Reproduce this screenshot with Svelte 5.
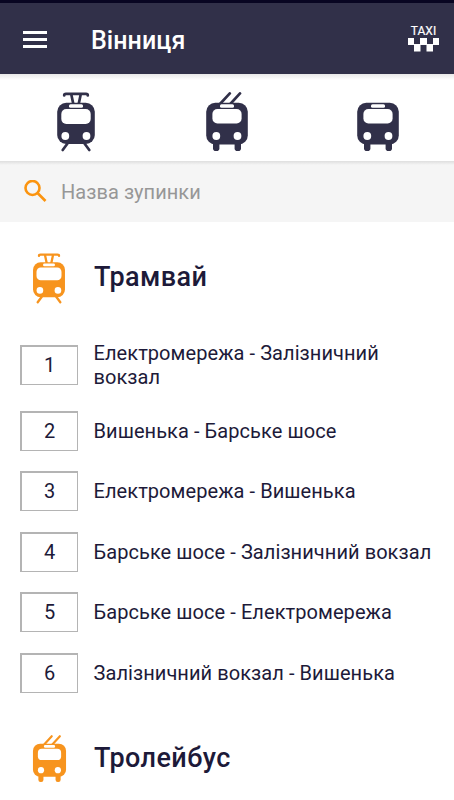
<script>
  let query = $state("");

  const tabs = ["tram", "trolley", "bus"];

  const tramRoutes = [
    { number: 1, name: "Електромережа - Залізничний вокзал" },
    { number: 2, name: "Вишенька - Барське шосе" },
    { number: 3, name: "Електромережа - Вишенька" },
    { number: 4, name: "Барське шосе - Залізничний вокзал" },
    { number: 5, name: "Барське шосе - Електромережа" },
    { number: 6, name: "Залізничний вокзал - Вишенька" },
  ];
</script>

{#snippet vehicle(kind)}
  <svg class="vehicle" viewBox="0 0 44 60" aria-hidden="true">
    {#if kind === "tram"}
      <path class="line" d="M10.2 3.4Q10.2 1.9 12 1.9H32Q33.8 1.9 33.8 3.4M17.2 2L19.2 11.5M26.8 2L24.8 11.5M13.5 51.5L8.7 58M30.5 51.5L35.3 58" />
      <rect x="3.2" y="10.8" width="37.6" height="41.2" rx="9" />
      <rect class="hole" x="7.3" y="17" width="29.4" height="15" rx="5" />
    {:else}
      {#if kind === "trolley"}
        <path class="line" d="M15 12L24.8 1.4M25.3 12L35 1.4" />
      {/if}
      <rect x="8" y="48" width="6.4" height="11" rx="2.8" />
      <rect x="29.6" y="48" width="6.4" height="11" rx="2.8" />
      <rect x="1.2" y="10.8" width="41.6" height="41.6" rx="9" />
      <rect class="hole" x="7.4" y="17" width="29.2" height="14.4" rx="5" />
    {/if}
    <rect class="hole" x="15" y="12.3" width="14" height="3.4" rx="1.5" />
    <circle class="hole" cx="11.3" cy="44" r="3.9" />
    <circle class="hole" cx="32.5" cy="44" r="3.9" />
  </svg>
{/snippet}

<div class="app">
  <header>
    <button class="menu" aria-label="Меню">
      <svg viewBox="0 0 24 18">
        <path d="M0 0h24v3H0zM0 7h24v3H0zM0 14h24v3H0z" />
      </svg>
    </button>
    <h1>Вінниця</h1>
    <div class="taxi">
      <span>TAXI</span>
      <svg viewBox="0 0 31 14">
        <path d="M0 0h6v7H0zM12 0h7v7h-7zM25 0h6v7h-6zM6 6h6.5v7.5H6zM18.5 6H25v7.5h-6.5z" />
      </svg>
    </div>
  </header>

  <nav>
    {#each tabs as kind}
      <button aria-label={kind}>{@render vehicle(kind)}</button>
    {/each}
  </nav>

  <label class="search">
    <svg viewBox="0 0 24 24">
      <circle cx="8.5" cy="8" r="7" />
      <path d="M13.5 13L21.5 21" />
    </svg>
    <input placeholder="Назва зупинки" bind:value={query} />
  </label>

  <main>
    <div class="section">
      <div class="badge">{@render vehicle("tram")}</div>
      <h2>Трамвай</h2>
    </div>
    <ul>
      {#each tramRoutes as route}
        <li>
          <span class="number">{route.number}</span>
          <span class="name">{route.name}</span>
        </li>
      {/each}
    </ul>
    <div class="section">
      <div class="badge small">{@render vehicle("trolley")}</div>
      <h2>Тролейбус</h2>
    </div>
  </main>
</div>

<style>
  :global(body) {
    overflow: hidden;
  }
  .app {
    --navy: #313049;
    --orange: #f7941e;
    height: 800px;
    overflow: hidden;
    display: flex;
    flex-direction: column;
    background: #fff;
    color: #1d1a39;
    font-family: Roboto, sans-serif;
  }
  button {
    border: 0;
    padding: 0;
    background: none;
  }
  h1,
  h2,
  ul {
    margin: 0;
    padding: 0;
  }
  h1,
  h2 {
    font-weight: 500;
  }
  svg {
    display: block;
  }
  header {
    flex: none;
    box-sizing: border-box;
    height: 74px;
    padding: 3px 15px 0 23px;
    border-top: 3px solid #080522;
    display: flex;
    align-items: center;
    background: var(--navy);
    color: #fff;
  }
  .menu svg {
    width: 24px;
    height: 18px;
    fill: #fff;
  }
  h1 {
    margin-left: 44px;
    padding-top: 2px;
    font-size: 25px;
    line-height: 30px;
    letter-spacing: 0.05px;
  }
  .taxi {
    margin-left: auto;
    padding-bottom: 3px;
    display: flex;
    flex-direction: column;
    align-items: center;
  }
  .taxi span {
    font-size: 12px;
    line-height: 13px;
    -webkit-text-stroke: 0.2px;
  }
  .taxi svg {
    width: 31px;
    height: 14px;
    fill: #fff;
  }
  nav {
    flex: none;
    box-sizing: border-box;
    height: 87px;
    padding-top: 18px;
    display: grid;
    grid-template-columns: repeat(3, 1fr);
    align-items: start;
    justify-items: center;
    background: linear-gradient(#e8e8e8, #fff 6px);
  }
  .vehicle {
    width: 44px;
    height: 60px;
    fill: var(--navy);
    color: var(--navy);
  }
  .line {
    fill: none;
    stroke: currentColor;
    stroke-width: 2.7;
    stroke-linecap: round;
  }
  .hole {
    fill: #fff;
  }
  .search {
    flex: none;
    box-sizing: border-box;
    height: 61px;
    padding: 0 24px;
    display: flex;
    align-items: center;
    gap: 13px;
    background: linear-gradient(#dedede, #f5f5f5 4px);
  }
  .search svg {
    flex: none;
    width: 24px;
    height: 24px;
    fill: none;
    stroke: #fb940f;
    stroke-width: 2.6;
  }
  input {
    flex: 1;
    min-width: 0;
    padding: 0;
    border: 0;
    outline: 0;
    background: none;
    font: 20px/24px Roboto, sans-serif;
    letter-spacing: 0.05px;
  }
  input::placeholder {
    color: #979797;
    opacity: 1;
  }
  main {
    padding: 30px 16px 0 20px;
  }
  .section {
    height: 52px;
    display: flex;
    align-items: center;
    gap: 16px;
  }
  .badge {
    width: 58px;
    display: flex;
    justify-content: center;
  }
  .badge .vehicle {
    width: 38px;
    height: 51px;
    fill: var(--orange);
    color: var(--orange);
  }
  .badge.small .vehicle {
    width: 35px;
    height: 48px;
  }
  h2 {
    padding-bottom: 2px;
    font-size: 27px;
    line-height: 32px;
    letter-spacing: 0.4px;
  }
  ul {
    padding: 30px 0;
    list-style: none;
  }
  li {
    height: 60.5px;
    display: flex;
    align-items: center;
    gap: 15.5px;
  }
  li:first-child {
    height: 61.5px;
    padding-bottom: 5px;
  }
  .number {
    flex: none;
    box-sizing: border-box;
    width: 58px;
    height: 40px;
    border: 1px solid #b4b4b4;
    border-width: 2px 1px 1px 2px;
    font-size: 20px;
    line-height: 37px;
    text-align: center;
  }
  .name {
    font-size: 20px;
    line-height: 24px;
    letter-spacing: 0.07px;
  }
</style>
